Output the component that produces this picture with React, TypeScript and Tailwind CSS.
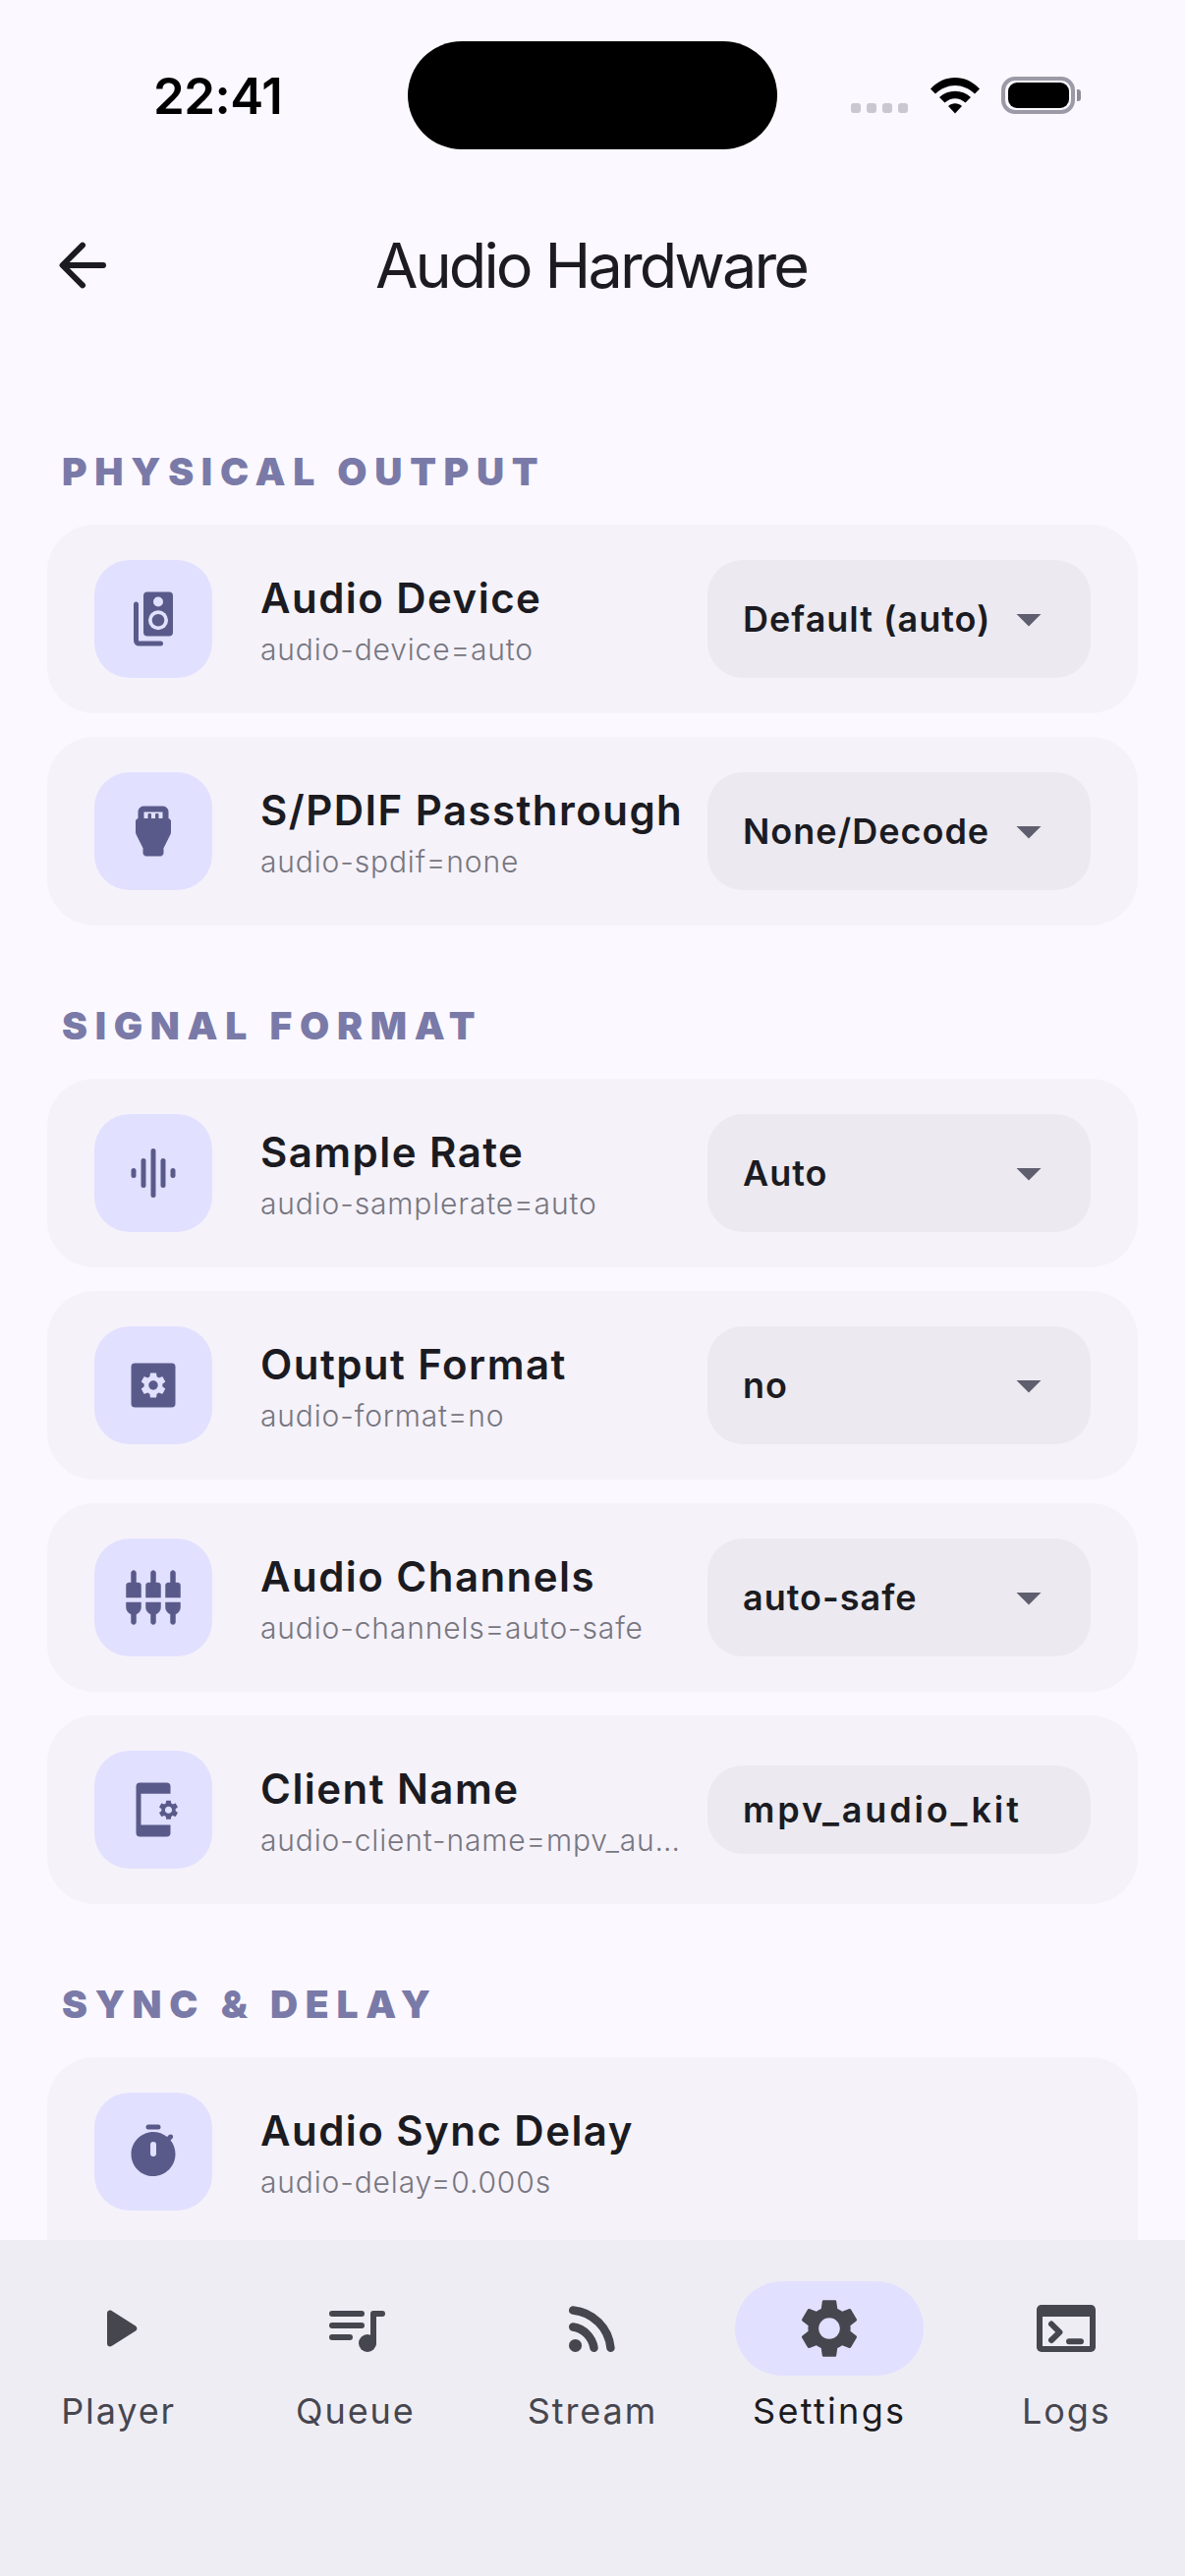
import React from "react";

const GEAR = "M19.14 12.94c.04-.3.06-.61.06-.94 0-.32-.02-.64-.07-.94l2.03-1.58c.18-.14.23-.41.12-.61l-1.92-3.32c-.12-.22-.37-.29-.59-.22l-2.39.96c-.5-.38-1.03-.7-1.62-.94l-.36-2.54c-.04-.24-.24-.41-.48-.41h-3.84c-.24 0-.43.17-.47.41l-.36 2.54c-.59.24-1.13.57-1.62.94l-2.39-.96c-.22-.08-.47 0-.59.22L2.74 8.87c-.12.21-.08.47.12.61l2.03 1.58c-.05.3-.09.63-.09.94s.02.64.07.94l-2.03 1.58c-.18.14-.23.41-.12.61l1.92 3.32c.12.22.37.29.59.22l2.39-.96c.5.38 1.03.7 1.62.94l.36 2.54c.05.24.24.41.48.41h3.84c.24 0 .44-.17.47-.41l.36-2.54c.59-.24 1.13-.56 1.62-.94l2.39.96c.22.08.47 0 .59-.22l1.92-3.32c.12-.22.07-.47-.12-.61l-2.01-1.58zM12 15.6c-1.98 0-3.6-1.62-3.6-3.6s1.62-3.6 3.6-3.6 3.6 1.62 3.6 3.6-1.62 3.6-3.6 3.6z";

const LIGHT = "#e1e0ff";

function Ico({ size = 60, children }: { size?: number; children: React.ReactNode }) {
  return (
    <svg width={size} height={size} viewBox="0 0 24 24" fill="currentColor" className="shrink-0">
      {children}
    </svg>
  );
}

const SpeakerIcon = () => (
  <Ico>
    <rect x="8" y="1" width="12" height="18" rx="1.6" />
    <circle cx="14" cy="5" r="2" fill={LIGHT} />
    <circle cx="14" cy="12.5" r="4" fill={LIGHT} />
    <circle cx="14" cy="12.5" r="2.5" />
    <path d="M5 6v14.8c0 .7.5 1.2 1.2 1.2H15" fill="none" stroke="currentColor" strokeWidth="2" strokeLinecap="round" />
  </Ico>
);

const HdmiIcon = () => (
  <Ico>
    <path
      fillRule="evenodd"
      stroke="currentColor"
      strokeWidth=".4"
      strokeLinejoin="round"
      d="M18 7V4c0-1.1-.9-2-2-2H8c-1.1 0-2 .9-2 2v3c-.6 0-1 .4-1 1v4.5c0 .3.05.5.2.8L8 18.9V21c0 .55.45 1 1 1h6c.55 0 1-.45 1-1v-2.1l2.8-5.6c.15-.3.2-.5.2-.8V8c0-.6-.4-1-1-1zM8 4h8v3h-2V5h-1v2h-2V5h-1v2H8V4z"
    />
  </Ico>
);

const EqIcon = () => (
  <Ico>
    <rect x="3" y="10" width="2" height="4" rx="1" />
    <rect x="7" y="6" width="2" height="12" rx="1" />
    <rect x="11" y="2" width="2" height="20" rx="1" />
    <rect x="15" y="6" width="2" height="12" rx="1" />
    <rect x="19" y="10" width="2" height="4" rx="1" />
  </Ico>
);

const FormatIcon = () => (
  <Ico>
    <rect x="3" y="3" width="18" height="18" rx="1.5" />
    <path fill={LIGHT} fillRule="evenodd" transform="translate(12 12) scale(.52) translate(-12 -12)" d={GEAR} />
  </Ico>
);

const ChannelsIcon = () => (
  <Ico>
    <path
      stroke="currentColor"
      strokeWidth=".2"
      strokeLinejoin="round"
      d="M5 2c0-.55-.45-1-1-1s-1 .45-1 1v4H2c-.55 0-1 .45-1 1v5h6V7c0-.55-.45-1-1-1H5V2zm4 14c0 1.3.84 2.4 2 2.82V22c0 .55.45 1 1 1s1-.45 1-1v-3.18c1.16-.41 2-1.51 2-2.82v-2H9v2zm-8 0c0 1.3.84 2.4 2 2.82V22c0 .55.45 1 1 1s1-.45 1-1v-3.18C6.16 18.4 7 17.3 7 16v-2H1v2zM21 6V2c0-.55-.45-1-1-1s-1 .45-1 1v4h-1c-.55 0-1 .45-1 1v5h6V7c0-.55-.45-1-1-1h-1zm-8-4c0-.55-.45-1-1-1s-1 .45-1 1v4h-1c-.55 0-1 .45-1 1v5h6V7c0-.55-.45-1-1-1h-1V2zm4 14c0 1.3.84 2.4 2 2.82V22c0 .55.45 1 1 1s1-.45 1-1v-3.18c1.16-.41 2-1.51 2-2.82v-2h-6v2z"
    />
  </Ico>
);

const PhoneIcon = () => (
  <Ico>
    <rect x="5" y="1" width="14" height="22" rx="1.6" />
    <rect x="7" y="5.5" width="12.2" height="12.7" fill={LIGHT} />
    <path fillRule="evenodd" transform="translate(18.2 12.1) scale(.4) translate(-12 -12)" d={GEAR} />
  </Ico>
);

const TimerIcon = () => (
  <Ico>
    <rect x="9" y="1" width="6" height="2" rx="1" />
    <path d="M19.03 7.39l.75-.75c.38-.38.39-1 0-1.39l-.01-.01c-.39-.39-1.01-.38-1.39 0l-.75.75C16.07 4.74 14.12 4 12 4c-4.8 0-8.88 3.96-9 8.76C2.87 17.84 6.94 22 12 22c4.98 0 9-4.03 9-9 0-2.12-.74-4.07-1.97-5.61z" />
    <rect x="10.8" y="8" width="2.4" height="6" rx="1.2" fill={LIGHT} />
  </Ico>
);

const PlayIcon = () => (
  <Ico size={72}>
    <path d="M8 6.82v10.36c0 .79.87 1.27 1.54.84l8.14-5.18c.62-.39.62-1.29 0-1.69L9.54 5.98C8.87 5.55 8 6.03 8 6.82z" />
  </Ico>
);

const QueueIcon = () => (
  <Ico size={72}>
    <rect x="3" y="6" width="12" height="2" rx="1" />
    <rect x="3" y="10" width="12" height="2" rx="1" />
    <rect x="3" y="14" width="8" height="2" rx="1" />
    <circle cx="16" cy="17" r="3" />
    <path d="M18 17V7h3" fill="none" stroke="currentColor" strokeWidth="2" strokeLinecap="round" strokeLinejoin="round" />
  </Ico>
);

const RssIcon = () => (
  <Ico size={72}>
    <circle cx="6.18" cy="17.82" r="2.18" />
    <path d="M5.4 5.85A14.2 14.2 0 0 1 18.15 18.6M5.4 11.5A8.5 8.5 0 0 1 12.5 18.6" fill="none" stroke="currentColor" strokeWidth="2.83" strokeLinecap="round" />
  </Ico>
);

const LogsIcon = () => (
  <Ico size={72}>
    <rect x="2" y="4" width="20" height="16" rx="1.6" />
    <rect x="4" y="8" width="16" height="10" fill="#efedf4" />
    <path d="M7 10.5l2.8 2.8L7 16M13 16.4h4" fill="none" stroke="currentColor" strokeWidth="2" strokeLinecap="round" strokeLinejoin="round" />
  </Ico>
);

function Row({
  icon,
  title,
  sub,
  value,
  field,
  tall,
}: {
  icon: React.ReactNode;
  title: string;
  sub: string;
  value?: string;
  field?: boolean;
  tall?: boolean;
}) {
  return (
    <div className={`shrink-0 rounded-[48px] bg-[#f5f2fa] px-[48px] ${tall ? "pb-[120px]" : ""}`}>
      <div className="flex h-[192px] items-center">
        <div className="flex h-[120px] w-[120px] shrink-0 items-center justify-center rounded-[36px] bg-[#e1e0ff] text-[#5a5a8a]">
          {icon}
        </div>
        <div className="ml-[49px] mr-[23px] min-w-0 flex-1">
          <div className="truncate text-[42px] leading-[60px] font-semibold tracking-[1.45px] text-[#1b1b21]">{title}</div>
          <div className="mt-[1px] truncate text-[30px] leading-[42px] font-light tracking-[.85px] text-[#777680]">{sub}</div>
        </div>
        {value !== undefined && (
          <div
            className={`flex w-[390px] shrink-0 items-center justify-between rounded-[36px] bg-[#ece9f0] pl-[36px] pr-[36px] text-[36px] font-semibold text-[#1b1b21] ${
              field ? "h-[90px] tracking-[2.85px]" : "h-[120px] tracking-[1px]"
            }`}
          >
            <span>{value}</span>
            {!field && (
              <svg width="60" height="60" viewBox="0 0 24 24" className="mr-[-3px] shrink-0" fill="#5f5e6e">
                <path d="M7 10l5 5 5-5z" />
              </svg>
            )}
          </div>
        )}
      </div>
    </div>
  );
}

function Section({ title, first, children }: { title: string; first?: boolean; children: React.ReactNode }) {
  return (
    <section className={first ? "mt-[108px]" : "mt-[72px]"}>
      <h2 className="pl-[15px] text-[39px] leading-[60px] font-black tracking-[7.7px] text-[#7a7aa8]">{title}</h2>
      <div className="mt-[24px] flex flex-col gap-[24px]">{children}</div>
    </section>
  );
}

function Tab({ icon, label, active }: { icon: React.ReactNode; label: string; active?: boolean }) {
  return (
    <div className="flex flex-1 flex-col items-center">
      <div className={`flex h-[96px] w-[192px] items-center justify-center rounded-full ${active ? "bg-[#e1e0ff]" : ""}`}>{icon}</div>
      <span className={`mt-[12px] text-[36px] leading-[48px] ${active ? "tracking-[2.3px] text-[#1b1b21]" : "tracking-[1.9px] text-[#46464f]"}`}>{label}</span>
    </div>
  );
}

export default function App() {
  return (
    <div className="relative flex h-[2622px] w-[1206px] flex-col overflow-hidden bg-[#fbf8ff] font-['Inter',sans-serif]">
      {/* status bar */}
      <div className="flex h-[198px] shrink-0 items-start justify-between pl-[156px] pr-[106px] pt-[70px]">
        <span className="text-[51px] leading-[56px] font-semibold tracking-[-.5px] text-black">22:41</span>
        <div className="mt-[8px] flex items-center">
          <div className="mt-[26px] flex gap-[6px]">
            {[0, 1, 2, 3].map((i) => (
              <span key={i} className="h-[10px] w-[10px] rounded-[3px] bg-[#c9c7d0]" />
            ))}
          </div>
          <svg width="50" height="38" viewBox="0 0 50 38" className="ml-[23px]">
            <path d="M0 12.5C14 -2.8 36 -2.8 50 12.5L45 17.5C33 6 17 6 5 17.5Z" fill="#000" />
            <path d="M9 21C18 12.5 32 12.5 41 21L35.5 26.5C29 20.7 21 20.7 14.5 26.5Z" fill="#000" />
            <path d="M18 30C22 26.3 28 26.3 32 30L25 37.5Z" fill="#000" />
          </svg>
          <div className="ml-[22px] flex items-center">
            <div className="flex h-[38px] w-[75px] items-center justify-center rounded-[14px] border-[4px] border-[#9c9aa6]">
              <div className="h-[26px] w-[62px] rounded-[9px] bg-black" />
            </div>
            <div className="ml-[2px] h-[12px] w-[4px] rounded-r-[3px] bg-[#8e8d96]" />
          </div>
        </div>
      </div>
      {/* dynamic island */}
      <div className="absolute left-[415px] top-[42px] h-[110px] w-[376px] rounded-[55px] bg-black" />
      {/* header */}
      <header className="relative flex h-[144px] shrink-0 items-center justify-center pr-[3px]">
        <svg width="72" height="72" viewBox="0 0 24 24" className="absolute left-[48px] top-[36px]" fill="none" stroke="#1b1b21" strokeWidth="2" strokeLinecap="round" strokeLinejoin="round">
          <path d="M19 12H5.4M12 5.2L5.2 12l6.8 6.8" />
        </svg>
        <h1 className="text-[63px] leading-[72px] font-normal tracking-[-2.9px] text-[#1b1b21]">Audio Hardware</h1>
      </header>
      {/* content */}
      <main className="min-h-0 flex-1 overflow-hidden px-[48px]">
        <Section title="PHYSICAL OUTPUT" first>
          <Row icon={<SpeakerIcon />} title="Audio Device" sub="audio-device=auto" value="Default (auto)" />
          <Row icon={<HdmiIcon />} title="S/PDIF Passthrough" sub="audio-spdif=none" value="None/Decode" />
        </Section>
        <Section title="SIGNAL FORMAT">
          <Row icon={<EqIcon />} title="Sample Rate" sub="audio-samplerate=auto" value="Auto" />
          <Row icon={<FormatIcon />} title="Output Format" sub="audio-format=no" value="no" />
          <Row icon={<ChannelsIcon />} title="Audio Channels" sub="audio-channels=auto-safe" value="auto-safe" />
          <Row icon={<PhoneIcon />} title="Client Name" sub="audio-client-name=mpv_audio_kit" value="mpv_audio_kit" field />
        </Section>
        <Section title="SYNC & DELAY">
          <Row icon={<TimerIcon />} title="Audio Sync Delay" sub="audio-delay=0.000s" tall />
        </Section>
      </main>
      {/* nav */}
      <nav className="flex h-[342px] shrink-0 bg-[#efedf4] pt-[42px] text-[#46464f]">
        <Tab icon={<PlayIcon />} label="Player" />
        <Tab icon={<QueueIcon />} label="Queue" />
        <Tab icon={<RssIcon />} label="Stream" />
        <Tab
          icon={
            <Ico size={72}>
              <path fillRule="evenodd" d={GEAR} />
            </Ico>
          }
          label="Settings"
          active
        />
        <Tab icon={<LogsIcon />} label="Logs" />
      </nav>
    </div>
  );
}
